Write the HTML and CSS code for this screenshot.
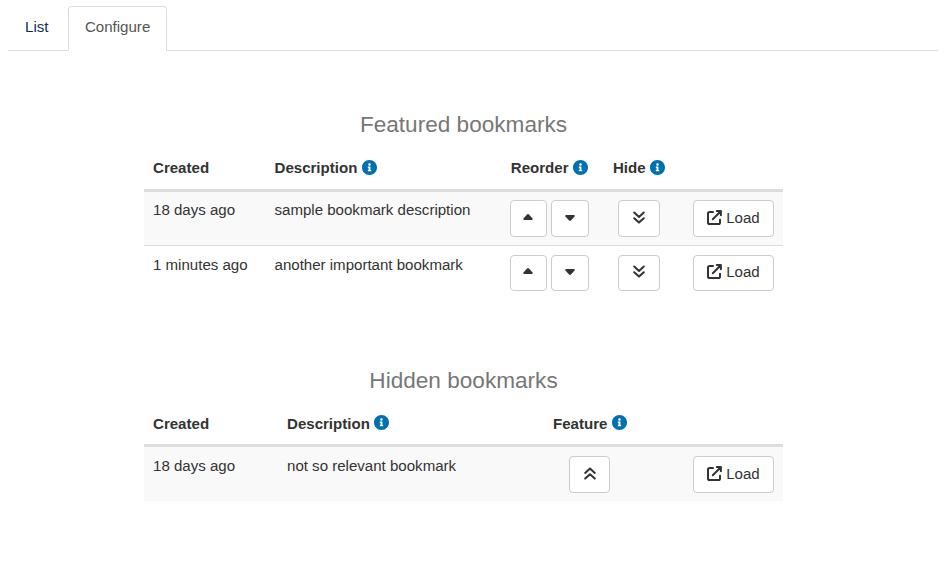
FILE: index.html
```html
<!DOCTYPE html>
<html lang="en">
<head>
<meta charset="utf-8">
<title>Bookmarks</title>
<link rel="stylesheet" href="styles.css">
</head>
<body>
<svg class="sprite" aria-hidden="true">
  <symbol id="info" viewBox="8 8 496 496"><path d="M256 8C119.043 8 8 119.083 8 256c0 136.997 111.043 248 248 248s248-111.003 248-248C504 119.083 392.957 8 256 8zm0 110c23.196 0 42 18.804 42 42s-18.804 42-42 42-42-18.804-42-42 18.804-42 42-42zm56 254c0 6.627-5.373 12-12 12h-88c-6.627 0-12-5.373-12-12v-24c0-6.627 5.373-12 12-12h12v-64h-12c-6.627 0-12-5.373-12-12v-24c0-6.627 5.373-12 12-12h64c6.627 0 12 5.373 12 12v100h12c6.627 0 12 5.373 12 12v24z"/></symbol>
  <symbol id="up" viewBox="0 0 10 6"><path d="M5 0Q5.500 0 5.900 .4L9.600 4.400Q10.100 5.800 8.900 6H1.100Q-.1 5.800 .4 4.400L4.100 .4Q4.500 0 5 0z"/></symbol>
  <symbol id="down" viewBox="0 0 10 6"><path d="M5 6Q4.500 6 4.100 5.600L.4 1.600Q-.1 .2 1.100 0H8.900Q10.100 .2 9.600 1.600L5.900 5.600Q5.500 6 5 6z"/></symbol>
  <symbol id="hide" viewBox="0 0 12 13"><path class="line" d="M1.200 1.500 6 5.900l4.800-4.400M1.200 7.200 6 11.600l4.800-4.400"/></symbol>
  <symbol id="feature" viewBox="0 0 12 13"><path class="line" d="M1.200 5.900 6 1.500 10.800 5.900M1.200 11.600 6 7.200l4.800 4.400"/></symbol>
  <symbol id="open" viewBox="0 0 15 15"><path class="line" d="M6 2H2.600Q1 2 1 3.600V12.400Q1 14 2.600 14H11.400Q13 14 13 12.400V9.800M5.800 9.200 13 2M9.800 1.100H13.900V5.200"/><path d="M9.800 1H14V5.200z"/></symbol>
</svg>

<nav class="tabs">
  <a class="tab">List</a>
  <a class="tab active">Configure</a>
</nav>

<main>
  <section class="featured">
    <h2>Featured bookmarks</h2>
    <div class="row head">
      <span>Created</span>
      <span>Description <svg class="info"><use href="#info"/></svg></span>
      <span>Reorder <svg class="info"><use href="#info"/></svg></span>
      <span>Hide <svg class="info"><use href="#info"/></svg></span>
      <span></span>
    </div>
    <div class="row first striped">
      <span>18 days ago</span>
      <span>sample bookmark description</span>
      <div class="order"><button class="btn up"><svg class="caret"><use href="#up"/></svg></button><button class="btn down"><svg class="caret"><use href="#down"/></svg></button></div>
      <div class="toggle"><button class="btn"><svg class="angles"><use href="#hide"/></svg></button></div>
      <div class="load"><button class="btn"><svg class="open"><use href="#open"/></svg>Load</button></div>
    </div>
    <div class="row second">
      <span>1 minutes ago</span>
      <span>another important bookmark</span>
      <div class="order"><button class="btn up"><svg class="caret"><use href="#up"/></svg></button><button class="btn down"><svg class="caret"><use href="#down"/></svg></button></div>
      <div class="toggle"><button class="btn"><svg class="angles"><use href="#hide"/></svg></button></div>
      <div class="load"><button class="btn"><svg class="open"><use href="#open"/></svg>Load</button></div>
    </div>
  </section>

  <section class="hidden">
    <h2>Hidden bookmarks</h2>
    <div class="row head">
      <span>Created</span>
      <span>Description <svg class="info"><use href="#info"/></svg></span>
      <span>Feature <svg class="info"><use href="#info"/></svg></span>
      <span></span>
    </div>
    <div class="row first striped">
      <span>18 days ago</span>
      <span>not so relevant bookmark</span>
      <div class="toggle"><button class="btn"><svg class="angles"><use href="#feature"/></svg></button></div>
      <div class="load"><button class="btn"><svg class="open"><use href="#open"/></svg>Load</button></div>
    </div>
  </section>
</main>
</body>
</html>
```

FILE: styles.css
```css
* { box-sizing: border-box; }
body {
  margin: 0;
  background: #fff;
  color: #333;
  font: 15.070px/21px "Liberation Sans", Arial, sans-serif;
}
.sprite { position: absolute; width: 0; height: 0; }
svg { fill: currentColor; flex: none; }
.line { fill: none; stroke: currentColor; stroke-width: 2; stroke-linecap: round; stroke-linejoin: round; }

.tabs {
  display: flex;
  margin: 0 12px 0 8px;
  padding-top: 6px;
  height: 51px;
  border-bottom: 1px solid #ddd;
}
.tab {
  height: 45px;
  padding: 9px 16px;
  border: 1px solid transparent;
  border-radius: 4px 4px 0 0;
  color: #0d2f57;
  margin-right: 2.500px;
}
.tab.active {
  border-color: #ddd;
  border-bottom-color: #fff;
  background: #fff;
  color: #555;
}

main { width: 639px; margin: 0 0 0 144px; }
.featured { padding-top: 59px; }
.hidden { padding-top: 66px; }
h2 {
  margin: 0;
  height: 30px;
  text-align: center;
  font-size: 22.600px;
  line-height: 30px;
  font-weight: 400;
  color: #777;
}
.row { display: grid; padding-left: 9px; }
.row > span { margin-top: -1px; }
.row.head > span { margin-top: 0; }
.featured .row { grid-template-columns: 121.500px 236.300px 102.200px 80px 90px; }
.hidden .row { grid-template-columns: 134px 266px 140px 90px; }
.head {
  height: 52px;
  padding-top: 17px;
  border-bottom: 3px solid #ddd;
  font-weight: 700;
}
.hidden .head { height: 51px; }
.info { width: 15px; height: 15px; color: #0070b0; vertical-align: -2px; }
.hidden .info { vertical-align: -1px; }
.row.first { padding-top: 8px; height: 53px; }
.row.second { padding-top: 9px; height: 55px; border-top: 1px solid #ddd; }
.hidden .row.first { height: 54px; padding-top: 9px; }
.striped { background: #f9f9f9; }

.btn {
  display: flex;
  align-items: center;
  justify-content: center;
  width: 42px;
  height: 37px;
  padding: 0 0 2px;
  border: 1px solid #ccc;
  border-radius: 4px;
  background: #fff;
  color: #333;
  font: inherit;
}
.order { display: flex; gap: 4px; margin-left: -1.300px; }
.order .up { width: 37px; padding-bottom: 3px; }
.order .down { width: 38px; padding-bottom: 1px; }
.toggle { padding-left: 5px; }
.hidden .toggle { padding-left: 16px; }
.hidden .toggle .btn { width: 41px; }
.load .btn { width: 81px; gap: 4px; }
.second .btn { height: 36px; padding-bottom: 3px; }
.second .order .up { padding-bottom: 4px; }
.second .order .down { padding-bottom: 2px; }
.caret { width: 10px; height: 6px; }
.angles { width: 12px; height: 13px; }
.open { width: 15px; height: 15px; }
```
